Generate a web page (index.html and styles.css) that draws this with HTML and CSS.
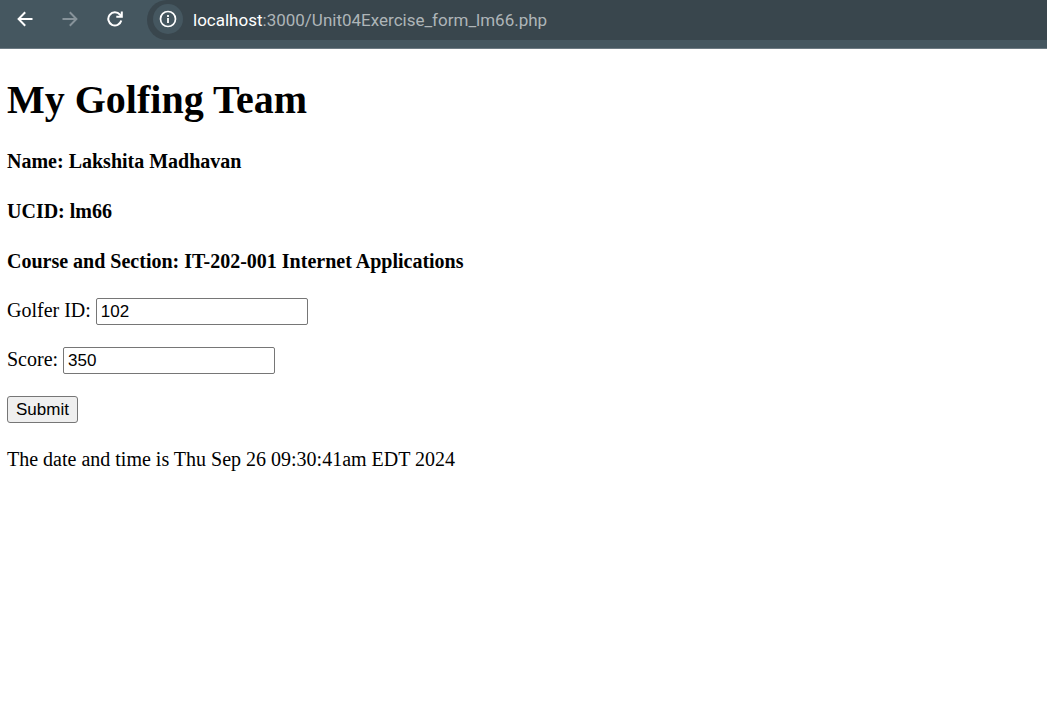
FILE: index.html
```html
<!DOCTYPE html>
<html lang="en">
<head>
<meta charset="utf-8">
<title>My Golfing Team</title>
<link rel="stylesheet" href="styles.css">
</head>
<body>
<header class="toolbar">
  <nav class="nav-buttons">
    <button class="nav-button" type="button" aria-label="Back">
      <svg width="16" height="16" viewBox="0 0 16 16" fill="none" stroke="currentColor" stroke-width="2"><path d="M15.5 8H2M8.2 1.3L1.6 8l6.6 6.700"/></svg>
    </button>
    <button class="nav-button nav-button-dim" type="button" aria-label="Forward">
      <svg width="16" height="16" viewBox="0 0 16 16" fill="none" stroke="currentColor" stroke-width="2"><path d="M.5 8H14M7.800 1.300L14.400 8l-6.600 6.700"/></svg>
    </button>
    <button class="nav-button" type="button" aria-label="Reload">
      <svg width="16" height="16" viewBox="0 0 16 16" fill="none" stroke="currentColor" stroke-width="2"><path d="M14.300 9.500A6.600 6.600 0 1 1 13 3.700L14.700 5.400M9.300 5.800H14.800V.5"/></svg>
    </button>
  </nav>
  <div class="address">
    <button class="info" type="button" aria-label="Site information">
      <svg width="18" height="18" viewBox="0 0 18 18" fill="none" stroke="currentColor"><circle cx="9" cy="9" r="7.500" stroke-width="1.700"/><path d="M9 8v5M9 5v2" stroke-width="1.800"/></svg>
    </button>
    <span class="url"><span class="host">localhost</span>:3000/Unit04Exercise_form_lm66.php</span>
  </div>
</header>
<main class="page">
  <h1 class="title">My Golfing Team</h1>
  <h3 class="detail">Name: Lakshita Madhavan</h3>
  <h3 class="detail">UCID: lm66</h3>
  <h3 class="detail">Course and Section: IT-202-001 Internet Applications</h3>
  <form class="form">
    <div class="field"><label for="golfer">Golfer ID:</label><input class="text" id="golfer" type="text" value="102"></div>
    <div class="field"><label for="score">Score:</label><input class="text" id="score" type="text" value="350"></div>
    <button class="submit" type="button">Submit</button>
  </form>
  <p class="stamp">The date and time is Thu Sep 26 09:30:41am EDT 2024</p>
</main>
</body>
</html>
```
FILE: styles.css
```css
* { box-sizing: border-box; }
body {
  margin: 0;
  background: #fff;
  color: #000;
  font: 20px/26px "Liberation Serif", "Times New Roman", serif;
}
.toolbar {
  display: flex;
  align-items: flex-start;
  gap: 23px;
  padding-left: 16px;
  height: 49px;
  background: #455760;
  border-bottom: 1px solid #6c7a83;
}
.nav-buttons { display: flex; gap: 27px; height: 38px; align-items: center; }
.nav-button {
  display: flex;
  padding: 1px;
  border: 0;
  background: none;
  color: #fff;
}
.nav-button-dim { color: #87939a; }
.address {
  flex: 1;
  display: flex;
  align-items: center;
  gap: 10px;
  height: 40px;
  padding: 0 0 2px 6px;
  background: #39464d;
  border-radius: 20px 0 0 20px;
}
.info {
  display: flex;
  align-items: center;
  justify-content: center;
  width: 30px;
  height: 30px;
  padding: 0;
  border: 0;
  border-radius: 50%;
  background: #455760;
  color: #fff;
}
.url { padding-top: 2px; font: 17px/24px Roboto, "Open Sans", sans-serif; color: #aeb5b8; }
.host { color: #fff; }
.page {
  display: flex;
  flex-direction: column;
  gap: 23px;
  padding: 26px 7px;
}
.title { margin: 0; font-size: 40px; line-height: 50px; }
.detail, .stamp { margin: 0; font-size: 20px; line-height: 27px; }
.form { display: flex; flex-direction: column; align-items: flex-start; gap: 22px; }
.field { display: flex; align-items: flex-start; gap: 5px; line-height: 24px; }
.text {
  width: 212px;
  height: 27px;
  padding: 1px 4px;
  border: 1px solid #767676;
  border-radius: 2px;
  font: 17px "Liberation Sans", Arial, sans-serif;
}
.submit {
  height: 27px;
  padding: 0 8px;
  border: 1px solid #767676;
  border-radius: 3px;
  background: #efefef;
  color: #000;
  font: 17px "Liberation Sans", Arial, sans-serif;
}
```
